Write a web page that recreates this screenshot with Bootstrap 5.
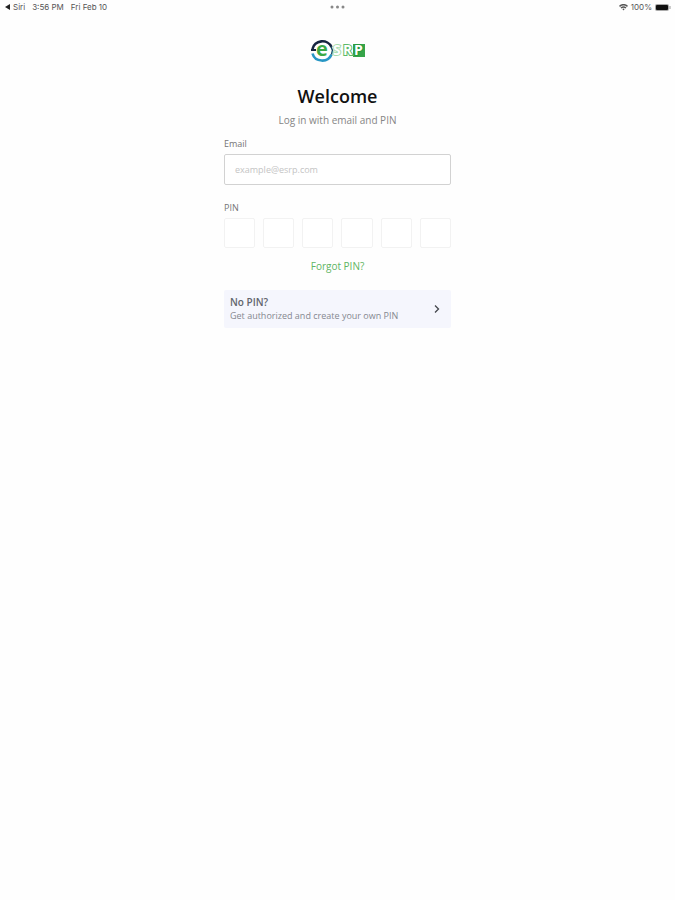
<!DOCTYPE html>
<html lang="en">
<head>
<meta charset="utf-8">
<meta name="viewport" content="width=device-width, initial-scale=1">
<title>eSRP – Log in</title>
<link href="https://cdn.jsdelivr.net/npm/bootstrap@5.3.0/dist/css/bootstrap.min.css" rel="stylesheet">
<style>
body { font-family: "Open Sans", "Noto Sans", sans-serif; font-size: 9px; line-height: 14px; color: #777; background: #fefefe; }
.status-bar { display: grid; grid-template-columns: 1fr auto 1fr; height: 14px; padding: 0 4px; font-family: Inter, "Liberation Sans", sans-serif; font-size: 8px; color: #555; }
.status-times { gap: 7px; }
.status-tight { gap: 3px; }
.login-panel { max-width: 227px; padding-top: 24px; }
.brand { height: 26px; }
h1 { font-size: 18px; line-height: 26px; font-weight: 600; color: #111; margin: 19px 0 4px; }
.subtitle { font-size: 10px; line-height: 14px; color: #858585; margin-bottom: 10px; }
.field-label { display: block; line-height: 14px; margin-bottom: 3px; color: #757575; }
.email-box { height: 31px; padding: 0 10px; border: 1px solid #d2d2d2; border-radius: 2px; font-size: 9px; background: #fff; }
.email-box::placeholder { color: #c4c4c4; opacity: 1; }
.pin-group { margin-top: 16px; }
.pin-row { display: grid; grid-template-columns: repeat(6, 1fr); gap: 8px; }
.pin-box { min-width: 0; height: 30px; padding: 0; border: 1px solid #f2f2f2; border-radius: 2px; font-size: 12px; background: #fff; }
.forgot { font-size: 10px; line-height: 14px; color: #5fb564; margin: 11px 0 17px; }
.no-pin { padding: 5px 10px 5px 6px; background: #f5f6fd; border-radius: 2px; color: #858890; }
.no-pin-title { font-size: 10px; font-weight: 600; color: #62656d; }
</style>
<script src="https://cdn.jsdelivr.net/npm/bootstrap@5.3.0/dist/js/bootstrap.bundle.min.js"></script>
</head>
<body>
<header class="status-bar align-items-center">
  <div class="status-times d-flex align-items-center">
    <span class="status-tight d-flex align-items-center"><svg width="6" height="6" aria-hidden="true"><path d="M6 0v6L1 3z" fill="#222"/></svg>Siri</span>
    <span>3:56 PM</span><span>Fri Feb 10</span>
  </div>
  <svg width="15" height="4" aria-hidden="true" fill="#888"><circle cx="2" cy="2" r="1.5"/><circle cx="7.5" cy="2" r="1.5"/><circle cx="13" cy="2" r="1.5"/></svg>
  <div class="status-tight d-flex align-items-center justify-content-end">
    <svg width="9" height="7" viewBox="0 0 9 7" fill="none" stroke="#555" stroke-width="1.5" aria-hidden="true"><path d="M.5 2.3Q4.500-.9 8.500 2.300M2 4Q4.500 2 7 4"/><path d="M3.300 5Q4.500 4.200 5.700 5L4.500 6.500z" fill="#555" stroke="none"/></svg>
    <span>100%</span>
    <svg width="16" height="7" viewBox="0 0 16 7" aria-hidden="true"><rect width="14" height="7" rx="2" fill="#aaa"/><rect x="1" y="1" width="12" height="5" rx="1" fill="#111"/><path d="M15 2v3" stroke="#999"/></svg>
  </div>
</header>
<main class="login-panel mx-auto">
  <div class="brand d-flex justify-content-center">
    <svg width="54" height="26" viewBox="0 0 54 26" role="img" aria-label="eSRP">
      <g fill="none" stroke-width="2.600">
        <path d="M1.500 11A10 9.500 0 0 1 20.500 9" stroke="#15243f"/>
        <path d="M1.500 15.500A10 9.500 0 0 0 20.500 16.500" stroke="#2796c4"/>
        <path d="M0 12h5" stroke="#15243f" stroke-width="2"/>
        <path d="M20 8.500l1.500 4-1 4" stroke="#1d4a63" stroke-width="1.500"/>
      </g>
      <text x="5" y="18" font-family="Open Sans, sans-serif" font-size="20" font-weight="700" fill="#39a845">e</text>
      <rect x="42" y="6" width="12" height="13" fill="#36a449"/>
      <g font-family="Open Sans, sans-serif" font-size="14" font-weight="700" fill="#fff" stroke-width="2" paint-order="stroke">
        <text x="22" y="17" stroke="#a6dcae">S</text>
        <text x="32" y="17" stroke="#5cba68">R</text>
        <text x="43" y="17" stroke="#269a3c">P</text>
      </g>
    </svg>
  </div>
  <h1 class="text-center">Welcome</h1>
  <p class="subtitle text-center">Log in with email and PIN</p>
  <form>
    <label class="field-label" for="email">Email</label>
    <input class="email-box form-control" id="email" type="email" placeholder="example@esrp.com">
    <fieldset class="pin-group">
      <label class="field-label" for="pin1">PIN</label>
      <div class="pin-row">
        <input class="pin-box text-center" id="pin1" type="password" inputmode="numeric" maxlength="1">
        <input class="pin-box text-center" type="password" inputmode="numeric" maxlength="1" aria-label="PIN digit 2">
        <input class="pin-box text-center" type="password" inputmode="numeric" maxlength="1" aria-label="PIN digit 3">
        <input class="pin-box text-center" type="password" inputmode="numeric" maxlength="1" aria-label="PIN digit 4">
        <input class="pin-box text-center" type="password" inputmode="numeric" maxlength="1" aria-label="PIN digit 5">
        <input class="pin-box text-center" type="password" inputmode="numeric" maxlength="1" aria-label="PIN digit 6">
      </div>
    </fieldset>
    <p class="forgot text-center"><a href="#" class="text-reset text-decoration-none">Forgot PIN?</a></p>
  </form>
  <a href="#" class="no-pin d-flex align-items-center justify-content-between text-decoration-none">
    <span class="d-flex flex-column"><span class="no-pin-title">No PIN?</span><span>Get authorized and create your own PIN</span></span>
    <svg width="8" height="10" viewBox="0 0 8 10" fill="none" stroke="#44474d" stroke-width="1.300" aria-hidden="true"><path d="M2 1.500 5.500 5 2 8.500"/></svg>
  </a>
</main>
</body>
</html>
